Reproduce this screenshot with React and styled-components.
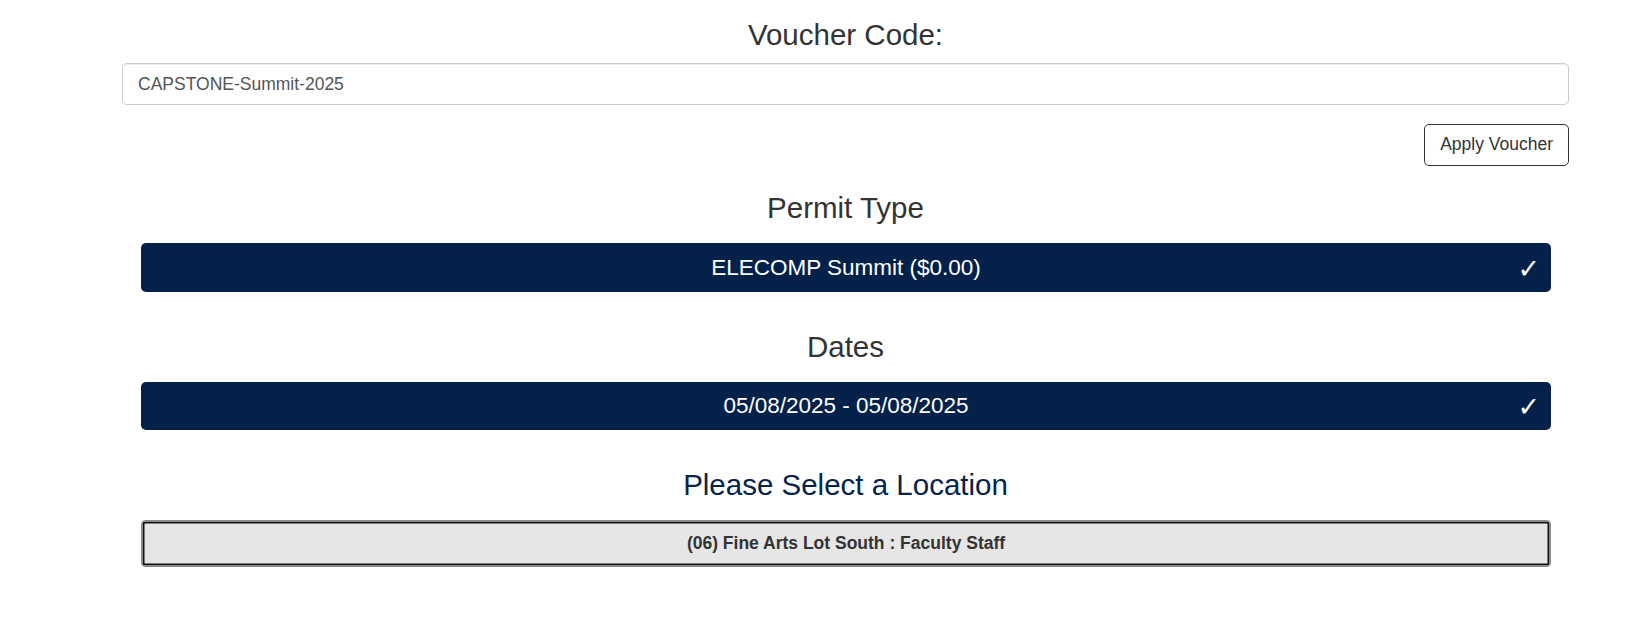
import React from 'react';
import styled, { createGlobalStyle } from 'styled-components';

const GlobalStyle = createGlobalStyle`
  html, body {
    margin: 0;
    padding: 0;
    background: #fff;
  }
  body {
    font-family: 'Liberation Sans', Arial, sans-serif;
    color: #333;
  }
`;

const Page = styled.div`
  padding: 18.5px 67px 40px 122px;
  display: flex;
  flex-direction: column;
`;

const Heading = styled.h3`
  margin: ${p => p.$top || 0}px 0 ${p => p.$bottom || 18.5}px;
  font-size: 29.5px;
  font-weight: 400;
  line-height: 1.1;
  text-align: center;
  color: ${p => p.$navy ? '#062449' : '#333'};
`;

const VoucherInput = styled.input`
  box-sizing: border-box;
  width: 100%;
  height: 42.5px;
  padding: 7.5px 15px;
  border: 1.25px solid #ccc;
  border-radius: 5px;
  box-shadow: inset 0 1px 1px rgba(0, 0, 0, 0.075);
  font-family: inherit;
  font-size: 17.5px;
  color: #555;
  outline: none;
`;

const Actions = styled.div`
  display: flex;
  justify-content: flex-end;
  margin-top: 18.5px;
`;

const OutlineButton = styled.button`
  box-sizing: border-box;
  height: 42px;
  padding: 0 15px;
  background: #fff;
  border: 1.25px solid #333;
  border-radius: 5px;
  font-family: inherit;
  font-size: 17.5px;
  color: #333;
  cursor: pointer;
`;

const Choice = styled.div`
  box-sizing: border-box;
  margin: 0 18px 0 19px;
  height: 48.5px;
  display: grid;
  grid-template-columns: 1fr auto 1fr;
  align-items: center;
  padding: 0 11px;
  background: #042249;
  border-radius: 5px;
  color: #fff;
  font-size: 22.5px;
`;

const ChoiceLabel = styled.span`
  grid-column: 2;
`;

const Check = styled.span`
  grid-column: 3;
  justify-self: end;
  font-family: 'DejaVu Sans', sans-serif;
  font-size: 27px;
  line-height: 1;
  margin-top: 2px;
`;

const LocationButton = styled.button`
  box-sizing: border-box;
  margin: 0 18px 0 19px;
  height: 47px;
  background: #e6e6e6;
  border: 1px solid #8c8c8c;
  border-radius: 4px;
  box-shadow: inset 0 0 0 0.5px #fff, inset 0 0 0 2.5px #111;
  font-family: inherit;
  font-size: 17.5px;
  font-weight: 700;
  color: #333;
  cursor: pointer;
`;

function SelectedChoice({ children }) {
  return (
    <Choice>
      <ChoiceLabel>{children}</ChoiceLabel>
      <Check>✓</Check>
    </Choice>
  );
}

export default function App() {
  return (
    <>
      <GlobalStyle />
      <Page>
        <Heading $bottom={12}>Voucher Code:</Heading>
        <VoucherInput type="text" defaultValue="CAPSTONE-Summit-2025" />
        <Actions>
          <OutlineButton>Apply Voucher</OutlineButton>
        </Actions>

        <Heading $top={26.5}>Permit Type</Heading>
        <SelectedChoice>ELECOMP Summit ($0.00)</SelectedChoice>

        <Heading $top={38.7}>Dates</Heading>
        <SelectedChoice>05/08/2025 - 05/08/2025</SelectedChoice>

        <Heading $top={39} $navy>Please Select a Location</Heading>
        <LocationButton>(06) Fine Arts Lot South : Faculty Staff</LocationButton>
      </Page>
    </>
  );
}
